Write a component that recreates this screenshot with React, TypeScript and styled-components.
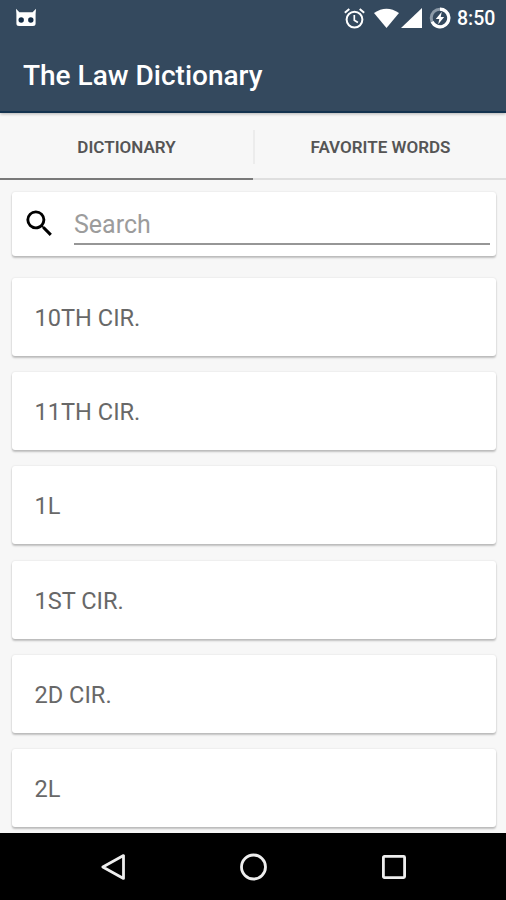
import React from "react";
import styled, { createGlobalStyle } from "styled-components";

const GlobalStyle = createGlobalStyle`
  * { box-sizing: border-box; }
  body {
    margin: 0;
    background: #f7f7f7;
    font-family: Roboto, "Liberation Sans", sans-serif;
  }
`;

const Screen = styled.div`
  width: 506px;
  height: 900px;
  display: flex;
  flex-direction: column;
  overflow: hidden;
  background: #f7f7f7;
`;

const Header = styled.header`
  flex: none;
  height: 113px;
  background: #34495e;
  border-bottom: 2px solid #14334f;
  box-shadow: 0 1px 3px rgba(0, 0, 0, 0.28);
  color: #fff;
`;

const StatusBar = styled.div`
  height: 36px;
  padding: 0 11px 0 15px;
  display: flex;
  align-items: center;
  justify-content: space-between;
`;

const StatusIcons = styled.div`
  display: flex;
  align-items: center;
`;

const Glyph = styled.svg<{ $gap?: number }>`
  display: block;
  flex: none;
  margin-right: ${(p) => p.$gap ?? 0}px;
`;

const Clock = styled.span`
  width: 38px;
  padding-top: 1px;
  font-size: 19.5px;
  font-weight: 500;
  line-height: 36px;
  white-space: nowrap;
`;

const Title = styled.h1`
  margin: 0;
  padding: 23px 0 0 23px;
  font-size: 28px;
  font-weight: 500;
  line-height: 33px;
  white-space: nowrap;
`;

const Tabs = styled.nav`
  flex: none;
  height: 68px;
  padding-bottom: 1px;
  display: grid;
  grid-template-columns: 253px 253px;
`;

const Tab = styled.button<{ $active?: boolean }>`
  margin: 0;
  padding: 17px 0 0;
  border: 0;
  border-bottom: ${(p) => (p.$active ? "2px solid #797979" : "2px solid #dfdfdf")};
  background: none;
  display: flex;
  align-items: flex-start;
`;

const TabLabel = styled.span<{ $divided?: boolean }>`
  flex: 1;
  height: 34px;
  border-left: ${(p) => (p.$divided ? "2px solid #ececec" : "0")};
  font-family: Roboto, "Liberation Sans", sans-serif;
  font-size: 17px;
  font-weight: 600;
  line-height: 35px;
  text-align: center;
  color: #555;
  white-space: nowrap;
`;

const Card = styled.div`
  border-radius: 3px;
  background: #fff;
  box-shadow: 0 2px 2px rgba(0, 0, 0, 0.22), 0 0 2px rgba(0, 0, 0, 0.13);
`;

const SearchCard = styled(Card)`
  flex: none;
  height: 64px;
  margin: 11px 10px 0 12px;
  padding: 0 6px 0 10px;
  display: flex;
  align-items: flex-start;
`;

const SearchIcon = styled.svg`
  flex: none;
  margin: 14px 17px 0 0;
`;

const SearchInput = styled.input`
  flex: 1;
  min-width: 0;
  height: 53px;
  padding: 14px 0 0;
  border: 0;
  border-bottom: 2px solid #969696;
  border-radius: 0;
  outline: 0;
  background: none;
  font-family: Roboto, "Liberation Sans", sans-serif;
  font-size: 25px;
  color: #505050;
  &::placeholder { color: #9c9c9c; opacity: 1; }
`;

const WordList = styled.main`
  flex: 1;
  min-height: 0;
  overflow: hidden;
  padding: 22px 10px 0 12px;
  display: flex;
  flex-direction: column;
  gap: 16.2px;
`;

const WordCard = styled(Card)`
  flex: none;
  height: 78px;
  padding: 0 22.5px;
  font-size: 23.6px;
  line-height: 80px;
  color: #686868;
`;

const NavBar = styled.footer`
  flex: none;
  height: 67px;
  background: #000;
  display: grid;
  grid-template-columns: repeat(3, 140.5px);
  justify-content: center;
  align-items: center;
  justify-items: center;
`;

const WORDS = ["10TH CIR.", "11TH CIR.", "1L", "1ST CIR.", "2D CIR.", "2L"];

function CatIcon() {
  return (
    <Glyph width="22" height="20" viewBox="0 0 22 20">
      <path d="M1 .8 4.400 4.200H17.600L21 .8 20.600 6V15.500Q20.600 18 18 18H4Q1.400 18 1.400 15.500V6Z" fill="#fff" />
      <circle cx="6.200" cy="12" r="2.700" fill="#142c45" />
      <circle cx="15.800" cy="12" r="2.700" fill="#142c45" />
    </Glyph>
  );
}

function AlarmIcon() {
  return (
    <Glyph $gap={9} width="21" height="21" viewBox="0 0 21 21" fill="none" stroke="#fff">
      <circle cx="10.500" cy="11.600" r="7.900" strokeWidth="2" />
      <path d="M.8 4.700 5.300 1M20.200 4.700 15.700 1" strokeWidth="2" />
      <path d="M10.300 7V12.200L13.900 14.500" strokeWidth="1.700" />
    </Glyph>
  );
}

function BatteryIcon() {
  return (
    <Glyph $gap={6} width="22" height="22" viewBox="0 0 22 22" fill="none">
      <circle cx="11" cy="11" r="8.800" stroke="#8c9aa8" strokeWidth="3" />
      <path d="M11 2.200A8.800 8.800 0 1 1 3.100 14.800" stroke="#fff" strokeWidth="3.200" />
      <path d="M12.800 4.800 6.800 12H10.300L9.200 17.200 15.200 10H11.700Z" fill="#fff" />
    </Glyph>
  );
}

export default function App() {
  return (
    <>
      <GlobalStyle />
      <Screen>
        <Header>
          <StatusBar>
            <CatIcon />
            <StatusIcons>
              <AlarmIcon />
              <Glyph $gap={2} width="25" height="20" viewBox="0 0 25 20">
                <path d="M0 5Q12.500-3.500 25 5L12.500 20Z" fill="#fff" />
              </Glyph>
              <Glyph $gap={7} width="21" height="20" viewBox="0 0 21 20">
                <path d="M21 0V20H0Z" fill="#fff" />
              </Glyph>
              <BatteryIcon />
              <Clock>8:50</Clock>
            </StatusIcons>
          </StatusBar>
          <Title>The Law Dictionary</Title>
        </Header>
        <Tabs>
          <Tab $active><TabLabel>DICTIONARY</TabLabel></Tab>
          <Tab><TabLabel $divided>FAVORITE WORDS</TabLabel></Tab>
        </Tabs>
        <SearchCard>
          <SearchIcon width="35" height="35" viewBox="0 0 24 24">
            <path
              fill="#000"
              d="M15.500 14h-.79l-.28-.27A6.471 6.471 0 0 0 16 9.500 6.500 6.500 0 1 0 9.500 16c1.610 0 3.090-.59 4.230-1.570l.27.28v.79l5 4.990L20.490 19l-4.990-5zm-6 0C7.010 14 5 11.990 5 9.500S7.010 5 9.500 5 14 7.010 14 9.500 11.990 14 9.500 14z"
            />
          </SearchIcon>
          <SearchInput placeholder="Search" aria-label="Search" />
        </SearchCard>
        <WordList>
          {WORDS.map((word) => (
            <WordCard key={word}>{word}</WordCard>
          ))}
        </WordList>
        <NavBar>
          <Glyph width="26" height="28" viewBox="0 0 26 28" fill="none" stroke="#eee" strokeWidth="2.800">
            <path d="M2.800 14 23.500 2.600V25.400Z" strokeLinejoin="round" />
          </Glyph>
          <Glyph width="28" height="28" viewBox="0 0 28 28" fill="none" stroke="#eee" strokeWidth="2.800">
            <circle cx="14.500" cy="14" r="12" />
          </Glyph>
          <Glyph width="26" height="26" viewBox="0 0 26 26" fill="none" stroke="#eee" strokeWidth="2.800">
            <rect x="2.400" y="2.400" width="21.200" height="21.200" rx="1" />
          </Glyph>
        </NavBar>
      </Screen>
    </>
  );
}
